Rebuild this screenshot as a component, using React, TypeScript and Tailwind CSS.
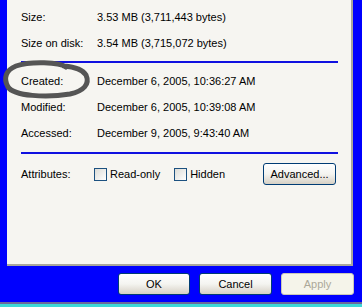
// File Properties dialog - General tab (lower half)
import React from "react"

const rows = [
  { label: "Size:", value: "3.53 MB (3,711,443 bytes)" },
  { label: "Size on disk:", value: "3.54 MB (3,715,072 bytes)" },
]

const dates = [
  { label: "Created:", value: "December 6, 2005, 10:36:27 AM" },
  { label: "Modified:", value: "December 6, 2005, 10:39:08 AM" },
  { label: "Accessed:", value: "December 9, 2005, 9:43:40 AM" },
]

const Row: React.FC<{ label: string; value: string }> = ({ label, value }) => (
  <div className="flex items-center h-[26px]">
    <span className="w-[76px]">{label}</span>
    <span>{value}</span>
  </div>
)

const Checkbox: React.FC<{ label: string }> = ({ label }) => (
  <label className="flex items-center gap-[3px]">
    <span className="w-[13px] h-[13px] border border-[#1c5180] bg-gradient-to-br from-[#dcdcd7] to-white" />
    <span>{label}</span>
  </label>
)

const xpButton =
  "h-[22px] rounded-[3px] border border-[#003c74] bg-gradient-to-b from-white via-[#f4f4f0] to-[#d6d0c5] flex items-center justify-center"

const App: React.FC = () => {
  return (
    <div className="relative w-[362px] h-[307px] bg-[#0000fe] overflow-hidden font-['Liberation_Sans',sans-serif] text-[11px] text-black">
      {/* tab page */}
      <div className="ml-[7px] w-[346px] h-[266px] bg-[#f6f5f1] border-r-2 border-b-2 border-[#a8a69b] px-[14px]">
        <div className="pt-[4px]">
          {rows.map((r) => (
            <Row key={r.label} {...r} />
          ))}
        </div>
        <div className="mt-[5px] h-[2px] bg-[#1010e0] w-[317px]" />
        <div className="mt-[5px]">
          {dates.map((r) => (
            <Row key={r.label} {...r} />
          ))}
        </div>
        <div className="mt-[6px] h-[2px] bg-[#1010e0] w-[317px]" />
        <div className="mt-[7px] flex items-center h-[26px]">
          <span className="w-[73px]">Attributes:</span>
          <div className="flex gap-[14px]">
            <Checkbox label="Read-only" />
            <Checkbox label="Hidden" />
          </div>
          <button className={`${xpButton} ml-auto mr-[1px] w-[73px]`}>Advanced...</button>
        </div>
      </div>

      {/* dialog buttons */}
      <div className="flex justify-end gap-[9px] pr-[8px] mt-[7px]">
        <button className={`${xpButton} w-[72px]`}>OK</button>
        <button className={`${xpButton} w-[73px]`}>Cancel</button>
        <button className="h-[22px] w-[73px] rounded-[3px] border border-[#c9c7ba] bg-[#f5f4ea] text-[#aca899] flex items-center justify-center">
          Apply
        </button>
      </div>

      <div className="absolute left-0 bottom-0 w-full">
        <div className="h-[2px] bg-[#6a6a9a]" />
        <div className="h-[3px] bg-[#3cd8d8]" />
      </div>

      {/* hand-drawn circle around Created */}
      <svg className="absolute left-0 top-[58px]" width="95" height="44" viewBox="0 0 95 44">
        <path
          d="M66 9 C60 4 30 3 16 8 C6 12 3 20 8 29 C14 38 46 40 70 36 C84 33 90 26 86 17 C83 12 76 9 64 8"
          fill="none"
          stroke="#555"
          strokeWidth="5"
          strokeLinecap="round"
        />
      </svg>
    </div>
  )
}

export default App
